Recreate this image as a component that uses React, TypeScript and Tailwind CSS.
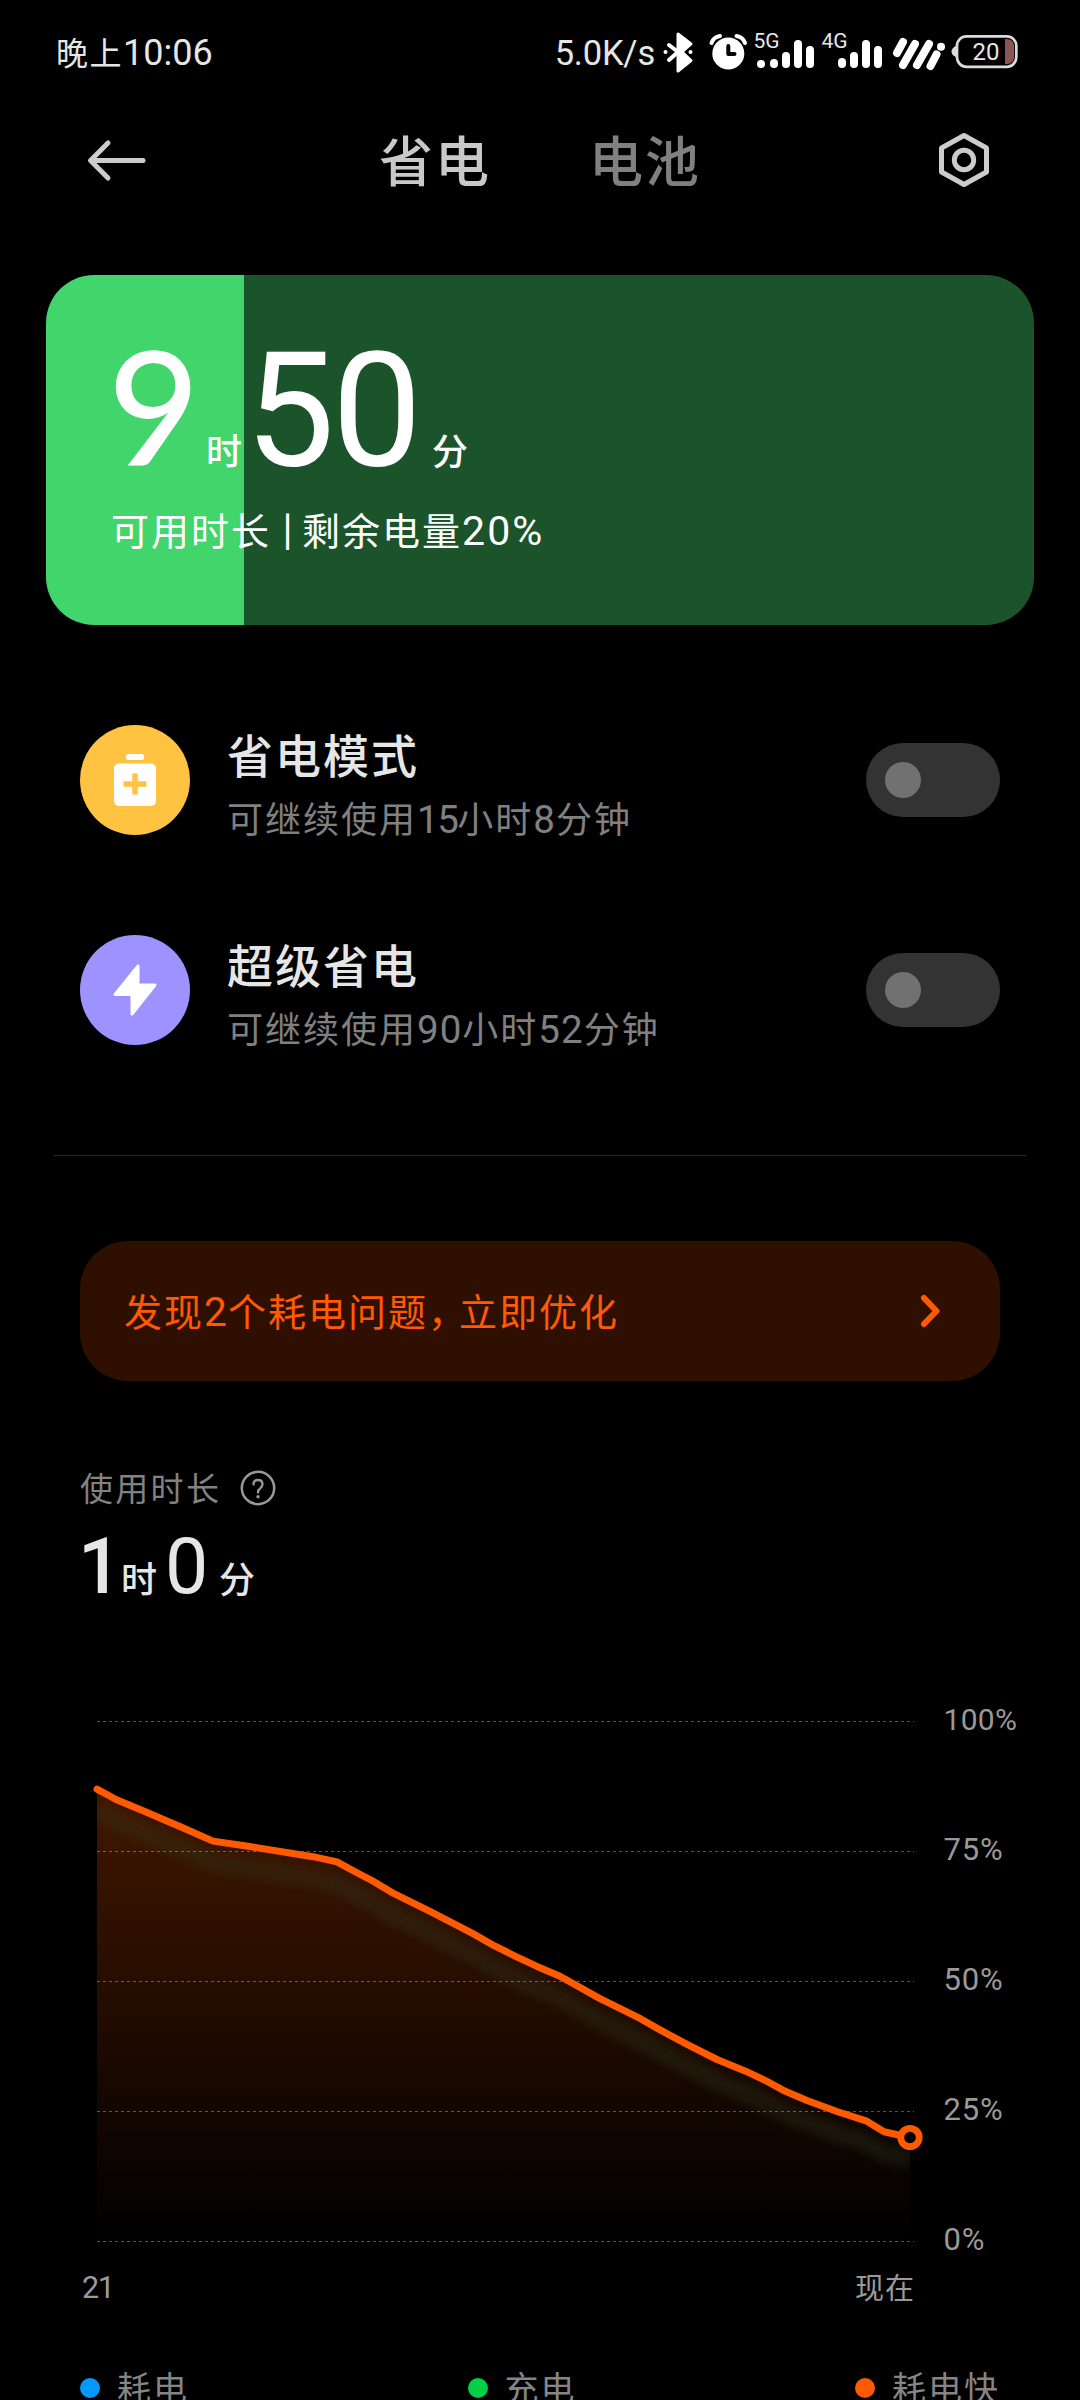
import React from 'react';

interface ModeRowProps {
  title: string;
  hint: React.ReactNode;
  color: string;
  icon: React.ReactNode;
}

// Battery level samples: x offset inside the plot and level in percent
const LEVELS: [number, number][] = [
  [0, 87], [19, 85], [49, 82.6], [84, 79.7], [116, 77], [151, 76], [216, 74], [240, 73],
  [259, 71], [277, 69.2], [295, 67.1], [333, 63.5], [375, 59.3], [395, 57.1], [418, 54.9],
  [440, 52.9], [463, 51], [503, 46.7], [543, 42.9], [563, 40.7], [591, 37.8], [620, 35],
  [648, 32.8], [668, 31], [686, 29.1], [710, 27.1], [740, 25], [769, 23.2], [787, 21.1],
  [813, 20],
];

const GRID = [100, 75, 50, 25, 0];

const LEGEND = [
  { label: '耗电', color: 'bg-[#0099ff]' },
  { label: '充电', color: 'bg-[#00d046]' },
  { label: '耗电快', color: 'bg-[#ff5a00]' },
];

const toX = (x: number) => 97 + x;
const toY = (level: number) => 39.5 + (100 - level) * 5.2;

// Digits run slightly larger than the Chinese text around them
const Num = ({ children, tight }: { children: React.ReactNode; tight?: boolean }) => (
  <span className={`font-['Roboto'] text-[1.07em] ${tight ? 'tracking-[-1.5px]' : 'tracking-[1px]'}`}>{children}</span>
);

const StatusBar = () => (
  <div className="flex h-[104px] items-center pl-[56px] pr-[62px] text-[#e6e6e6]">
    <div className="whitespace-nowrap pt-[2px] text-[32px] leading-none tracking-[1.5px]">
      晚上<span className="font-['Roboto'] text-[36px] tracking-[0px]">10:06</span>
    </div>
    <div className="ml-auto pt-[2px] font-['Roboto'] text-[34.5px] leading-none tracking-[-0.2px]">5.0K/s</div>
    <svg width="360" height="64" viewBox="658 20 360 64" fill="none" className="ml-[3px] shrink-0">
      {/* bluetooth */}
      <path d="M669 45 L678 52 L669 60" stroke="#fff" strokeWidth="4" strokeLinecap="round" strokeLinejoin="round" />
      <path d="M678 34 L691 44 L682 52 L691 60.5 L678 71 Z" fill="#fff" stroke="#fff" strokeWidth="3" strokeLinejoin="round" />
      <circle cx="665.5" cy="52" r="2" fill="#fff" />
      <circle cx="690.5" cy="52" r="2" fill="#fff" />
      {/* alarm */}
      <circle cx="728.3" cy="53.5" r="16" fill="#fff" />
      <path d="M728.3 46 V54 H734.5" stroke="#000" strokeWidth="4" strokeLinecap="round" strokeLinejoin="round" />
      <path d="M711.5 43 Q713.5 37 720 36 M745 43 Q743 37 736.5 36" stroke="#fff" strokeWidth="4" strokeLinecap="round" />
      {/* signal */}
      <g stroke="#fff" strokeWidth="8" strokeLinecap="round">
        <path d="M761 64 H761.01 M774 64 V63 M786 64 V56 M798 64 V44 M810 64 V50" />
        <path d="M842 64 V62 M854 64 V56 M866 64 V44 M878 64 V50" />
      </g>
      <text x="753.5" y="48" fontSize="21" fill="#e6e6e6" className="font-['Roboto']">5G</text>
      <text x="821.5" y="48" fontSize="21" fill="#e6e6e6" className="font-['Roboto']">4G</text>
      {/* carrier */}
      <g stroke="#fff" strokeWidth="8" strokeLinecap="round">
        <path d="M903 42 L897 53 M915 44 L903 65 M929 44 L917 65 M936.5 54.5 L930.5 66" />
        <path d="M941 46.8 H941.01" />
      </g>
      {/* battery */}
      <path d="M956 46 Q951.5 48 951.5 51.5 Q951.5 55 956 57 Z" fill="#dcdcdc" />
      <rect x="957" y="36.3" width="59.3" height="30.5" rx="9.5" stroke="#dcdcdc" strokeWidth="2.7" />
      <path d="M1005 39 H1007 Q1014 39.5 1014 46 V57 Q1014 63.5 1007 64 H1005 Z" fill="#8a5552" />
      <text x="972.5" y="60.3" fontSize="24" fill="#e6e6e6" className="font-['Roboto']">20</text>
    </svg>
  </div>
);

const Header = () => (
  <div className="flex h-[112px] items-center pl-[86px] pr-[88px]">
    <svg width="62" height="44" viewBox="0 0 62 44" fill="none" stroke="#cccccc" strokeWidth="5" strokeLinecap="round" strokeLinejoin="round">
      <path d="M57 22.5 H5 M22 5 L4.5 22.5 L22 40" />
    </svg>
    <div className="ml-[231px] pt-[3px] text-[54px] font-medium leading-none tracking-[2px] text-[#c9c9c9]">省电</div>
    <div className="ml-[98px] pt-[3px] text-[54px] font-medium leading-none tracking-[2px] text-[#808080]">电池</div>
    <svg width="56" height="58" viewBox="0 0 56 58" fill="none" stroke="#cccccc" strokeWidth="5" strokeLinejoin="round" className="ml-auto">
      <path d="M28 4.5 L50.5 17 V41 L28 53.5 L5.5 41 V17 Z" />
      <circle cx="28" cy="29" r="9.7" />
    </svg>
  </div>
);

const BatteryCard = () => (
  <div className="mx-[46px] mt-[59px] h-[350px] rounded-[48px] bg-linear-to-r from-[#42d56b] from-20% to-[#1b542b] to-20% pl-[62px] pt-[48px] text-white">
    <div className="flex h-[160px] items-baseline text-[158px] leading-[162px]">
      <span className="w-[98px] font-medium">9</span>
      <span className="w-[39px] text-[36px] font-medium">时</span>
      <span className="w-[187px] font-['Roboto'] text-[160px] tracking-[-3px]">50</span>
      <span className="text-[36px] font-medium">分</span>
    </div>
    <div className="mt-[23px] h-[48px] whitespace-nowrap pl-[3px] text-[38px] leading-[48px] tracking-[2px]">
      可用时长 <span className="relative -top-0.5 font-medium tracking-[-2px]">|</span> 剩余电量<span className="font-['Roboto'] text-[41px]">20%</span>
    </div>
  </div>
);

const ModeRow: React.FC<ModeRowProps> = ({ title, hint, color, icon }) => (
  <div className="flex h-[110px] items-center">
    <div className={`flex size-[110px] shrink-0 items-center justify-center rounded-full ${color}`}>{icon}</div>
    <div className="ml-[37px] flex-1 self-start whitespace-nowrap pt-[3px]">
      <div className="h-[56px] text-[46px] font-medium leading-[56px] tracking-[2px] text-[#e6e6e6]">{title}</div>
      <div className="mt-[13px] h-[44px] text-[36px] leading-[44px] tracking-[2px] text-[#808080]">{hint}</div>
    </div>
    <div className="flex h-[74px] w-[134px] items-center rounded-full bg-[#333333] pl-[19px]">
      <div className="size-[36px] rounded-full bg-[#717171]"></div>
    </div>
  </div>
);

const UsageChart = () => {
  const points = LEVELS.map(([x, level]) => `${toX(x)},${toY(level)}`).join(' ');
  const area = `${toX(0)},${toY(0)} ${points} ${toX(813)},${toY(0)}`;

  return (
    <svg width="1080" height="640" viewBox="0 0 1080 640" fill="none" className="mt-[76px]">
      <defs>
        <linearGradient id="fill" gradientUnits="userSpaceOnUse" x1="0" y1={toY(87)} x2="0" y2={toY(0)}>
          <stop offset="0" stopColor="#ff5a00" stopOpacity="0.26" />
          <stop offset="1" stopColor="#ff5a00" stopOpacity="0" />
        </linearGradient>
        <filter id="soft" x="-10%" y="-10%" width="120%" height="120%">
          <feGaussianBlur stdDeviation="6.5" />
        </filter>
        <clipPath id="plot">
          <polygon points={area} />
        </clipPath>
      </defs>
      <polygon points={area} fill="url(#fill)" />
      <g clipPath="url(#plot)">
        <polyline points={points} transform="translate(0 22)" stroke="#2e3d21" strokeOpacity="0.42" strokeWidth="13" filter="url(#soft)" />
      </g>
      {GRID.map((level) => (
        <g key={level}>
          <path d={`M97 ${toY(level)} H914`} stroke="#ffffff" strokeOpacity="0.33" strokeDasharray="3 3" />
          <text x="943.5" y={toY(level) + 8.5} fontSize={level === 100 ? 30 : 31} letterSpacing={level === 100 ? 0.3 : 0.8} fill="#999999" className="font-['Roboto']">{level}%</text>
        </g>
      ))}
      <polyline points={points} stroke="#ff5a00" strokeWidth="7" strokeLinecap="round" strokeLinejoin="round" />
      <circle cx={toX(813)} cy={toY(20)} r="9.2" fill="#000" stroke="#ff5a00" strokeWidth="6.8" />
      <text x="82" y="616" fontSize="30.5" letterSpacing="-1.5" fill="#999999" className="font-['Roboto']">21</text>
      <text x="855" y="616.5" fontSize="29" letterSpacing="1" fill="#999999">现在</text>
    </svg>
  );
};

const App: React.FC = () => {
  return (
    <div lang="zh-CN" className="h-[2400px] w-[1080px] overflow-hidden bg-black font-['Lato','Noto_Sans_CJK_SC',sans-serif]">
      <StatusBar />
      <Header />
      <BatteryCard />

      <div className="mt-[100px] flex flex-col gap-[100px] px-[80px]">
        <ModeRow
          title="省电模式"
          hint={<>可继续使用<Num tight>15</Num>小时<Num>8</Num>分钟</>}
          color="bg-[#ffc341]"
          icon={
            <svg width="44" height="54" viewBox="0 0 44 54">
              <rect x="13" y="1" width="18" height="6" rx="2.5" fill="#fff" />
              <rect x="1" y="10.5" width="42" height="42.5" rx="5" fill="#fff" />
              <path d="M22 20.5 V41.5 M10.5 31 H33.5" stroke="#ffc341" strokeWidth="5.5" />
            </svg>
          }
        />
        <ModeRow
          title="超级省电"
          hint={<>可继续使用<Num>90</Num>小时<Num>52</Num>分钟</>}
          color="bg-[#9d92ff]"
          icon={
            <svg width="44" height="54" viewBox="0 0 44 54">
              <path d="M25 3 V22 H42 L19 51 V31.5 H2 Z" fill="#fff" stroke="#fff" strokeWidth="3" strokeLinejoin="round" />
            </svg>
          }
        />
      </div>

      <div className="mx-[54px] mt-[110px] h-px bg-[#262626]"></div>

      <div className="mx-[80px] mt-[85px] flex h-[140px] items-center rounded-[48px] bg-[#2e0f00] pl-[44px] pr-[60px] text-[#ff5a00]">
        <div className="whitespace-nowrap pt-[2px] text-[38px] leading-none tracking-[2px]">
          发现<Num>2</Num>个耗电问题<span className="tracking-[-7px]">，</span>立即优化
        </div>
        <svg width="20" height="34" viewBox="0 0 20 34" fill="none" stroke="currentColor" strokeWidth="6" strokeLinecap="round" strokeLinejoin="round" className="ml-auto">
          <path d="M4 4 L16.5 17 L4 30" />
        </svg>
      </div>

      <div className="mt-[89px] flex h-[36px] items-center px-[80px] text-[#828282]">
        <div className="text-[33px] leading-none tracking-[2.3px]">使用时长</div>
        <svg width="36" height="36" viewBox="0 0 36 36" fill="none" className="ml-[19px]">
          <circle cx="18" cy="18" r="16.2" stroke="#999999" strokeWidth="2.5" />
          <path d="M13.5 14.5 Q13.5 10 18 10 Q22.5 10 22.5 14.3 Q22.5 16.5 20.3 18.2 Q18 19.8 18 22.5" stroke="#999999" strokeWidth="2.3" strokeLinecap="round" />
          <circle cx="18" cy="26.8" r="1.7" fill="#999999" />
        </svg>
      </div>
      <div className="mt-[23px] flex h-[77px] items-baseline pl-[78px] text-[77px] leading-[77px] text-[#e6e6e6]">
        <span className="w-[43px] font-['Roboto'] font-medium">1</span>
        <span className="w-[44px] text-[36px] font-medium">时</span>
        <span className="w-[54px] font-['Roboto']">0</span>
        <span className="text-[36px] font-medium">分</span>
      </div>

      <UsageChart />

      <div className="mt-[46px] flex h-[40px] justify-between px-[80px]">
        {LEGEND.map((item) => (
          <div key={item.label} className="flex items-center">
            <span className={`size-[20px] rounded-full ${item.color}`}></span>
            <span className="ml-[17px] text-[34px] leading-[40px] tracking-[2px] text-[#858585]">{item.label}</span>
          </div>
        ))}
      </div>
    </div>
  );
};

export default App;
